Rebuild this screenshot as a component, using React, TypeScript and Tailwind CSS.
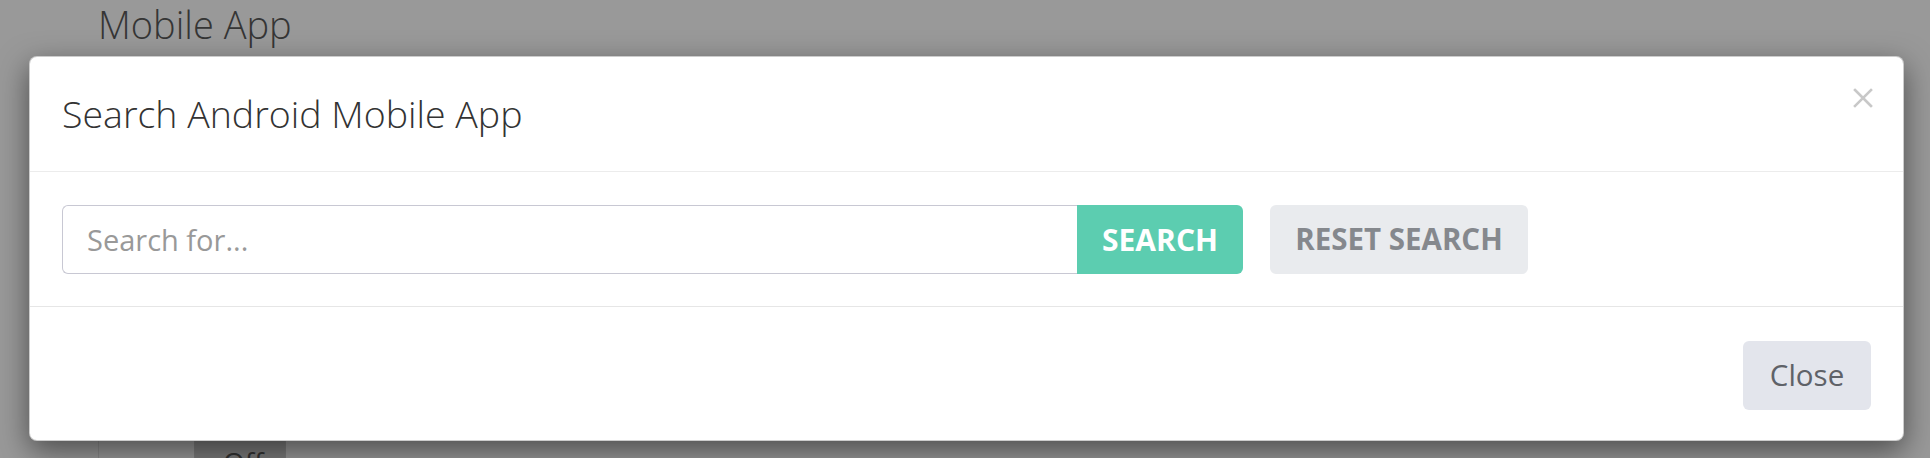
export default function App() {
  return (
    <div className="relative h-[458px] w-full overflow-hidden bg-[#999999] font-['Open_Sans',sans-serif]">
      {/* Page behind the overlay */}
      <div className="pl-[98px] pt-[2px]">
        <h2 className="text-[38px] font-light leading-[44px] text-[#353535]">Mobile App</h2>
      </div>
      <div className="ml-[98px] mt-[355px] flex h-[60px] border-l border-[#8a8a8a]">
        <div className="w-[95px]" />
        <div className="w-[92px] border-x border-[#7d7d7d] bg-[#7b7b7b] pl-[28px] pt-[40px] text-[28px] text-[#333]">
          Off
        </div>
      </div>

      {/* Modal */}
      <div className="absolute left-[29px] top-[56px] w-[1875px] rounded-lg border border-black/20 bg-white shadow-[0_10px_30px_rgba(0,0,0,0.5)]">
        <div className="flex h-[115px] items-center justify-between border-b border-[#ececec] px-8">
          <h4 className="text-[37.5px] font-light leading-none text-[#333]">Search Android Mobile App</h4>
          <button className="-mr-[2px] mb-[33px] text-[#c8c8c8]">
            <svg width="20" height="20" viewBox="0 0 20 20" fill="none" stroke="currentColor" strokeWidth="2.6" strokeLinecap="square">
              <path d="M2 2L18 18M18 2L2 18" />
            </svg>
          </button>
        </div>

        <div className="flex items-center border-b border-[#e6e6e6] px-8 pb-[32px] pt-[33px]">
          <div className="flex h-[69px]">
            <input
              placeholder="Search for..."
              className="h-full w-[1015px] rounded-l-md border border-r-0 border-[#c8c8d3] px-[24px] text-[29px] text-[#333] outline-none placeholder:text-[#999]"
            />
            <button className="h-full w-[166px] rounded-r-md bg-[#5ccdb0] text-[30px] font-bold text-white">
              SEARCH
            </button>
          </div>
          <button className="ml-[27px] h-[69px] w-[258px] rounded-md bg-[#e9ebee] text-[29.5px] font-bold text-[#85888d]">
            RESET SEARCH
          </button>
        </div>

        <div className="flex justify-end px-8 pb-[30px] pt-[34px]">
          <button className="h-[69px] w-[128px] rounded-md bg-[#e3e5ec] text-[29.5px] text-[#5f6268]">Close</button>
        </div>
      </div>
    </div>
  );
}
